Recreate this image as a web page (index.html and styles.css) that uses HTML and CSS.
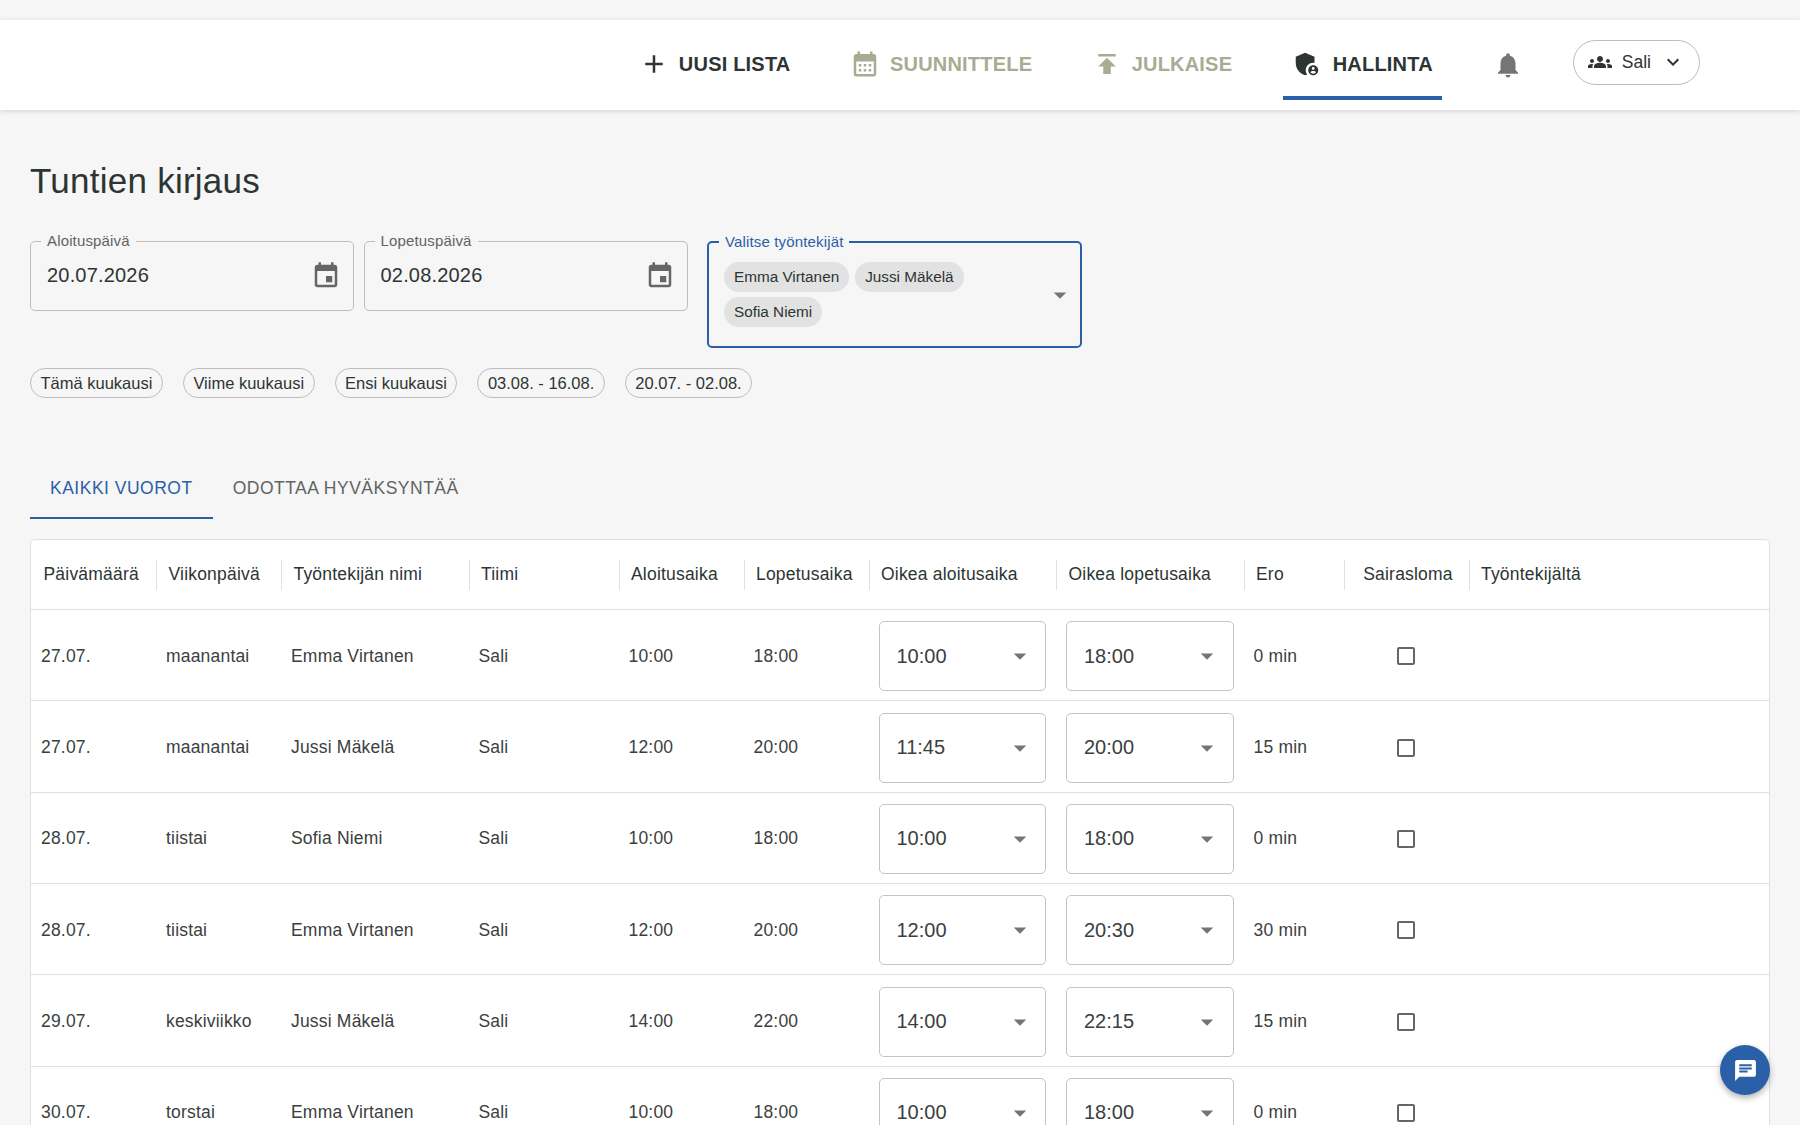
FILE: index.html
```html
<!DOCTYPE html>
<html lang="en">
<head>
    <meta charset="UTF-8">
    <title>Tuntien kirjaus</title>
    <link rel="stylesheet" href="styles.css">
</head>
<body>
    <svg class="defs" width="0" height="0">
        <symbol id="i-add" viewBox="0 0 24 24"><path d="M19 13h-6v6h-2v-6H5v-2h6V5h2v6h6v2z"/></symbol>
        <symbol id="i-month" viewBox="0 0 24 24"><path d="M19 4h-1V2h-2v2H8V2H6v2H5c-1.11 0-1.99.9-1.99 2L3 20a2 2 0 0 0 2 2h14c1.1 0 2-.9 2-2V6c0-1.1-.9-2-2-2zm0 16H5V10h14v10zM9 14H7v-2h2v2zm4 0h-2v-2h2v2zm4 0h-2v-2h2v2zm-8 4H7v-2h2v2zm4 0h-2v-2h2v2zm4 0h-2v-2h2v2z"/></symbol>
        <symbol id="i-publish" viewBox="0 0 24 24"><path d="M5 4v2h14V4H5zm0 10h4v6h6v-6h4l-7-7-7 7z"/></symbol>
        <symbol id="i-admin" viewBox="0 0 24 24"><path d="M17 11c.34 0 .67.04 1 .09V6.27L10.5 3 3 6.27v4.91c0 4.54 3.2 8.79 7.5 9.82.55-.13 1.08-.32 1.6-.55-.69-.98-1.1-2.17-1.1-3.45 0-3.31 2.69-6 6-6z"/><path d="M17 13c-2.21 0-4 1.79-4 4s1.79 4 4 4 4-1.79 4-4-1.79-4-4-4zm0 1.38c.62 0 1.12.51 1.12 1.12s-.51 1.12-1.12 1.12-1.12-.51-1.12-1.12.5-1.12 1.12-1.12zm0 5.37c-.93 0-1.74-.46-2.24-1.17.05-.72 1.51-1.08 2.24-1.08s2.19.36 2.24 1.08c-.5.71-1.31 1.17-2.24 1.17z"/></symbol>
        <symbol id="i-bell" viewBox="0 0 24 24"><path d="M12 22c1.1 0 2-.9 2-2h-4c0 1.1.89 2 2 2zm6-6v-5c0-3.07-1.64-5.64-4.5-6.32V4c0-.83-.67-1.5-1.5-1.5s-1.5.67-1.5 1.5v.68C7.63 5.36 6 7.92 6 11v5l-2 2v1h16v-1l-2-2z"/></symbol>
        <symbol id="i-groups" viewBox="0 0 24 24"><path d="M12 12.75c1.63 0 3.07.39 4.24.9 1.08.48 1.76 1.56 1.76 2.73V18H6v-1.61c0-1.18.68-2.26 1.76-2.73 1.17-.52 2.61-.91 4.24-.91zM4 13c1.1 0 2-.9 2-2s-.9-2-2-2-2 .9-2 2 .9 2 2 2zm1.13 1.1c-.37-.06-.74-.1-1.13-.1-.99 0-1.93.21-2.78.58C.48 14.9 0 15.62 0 16.43V18h4.5v-1.61c0-.83.23-1.61.63-2.29zM20 13c1.1 0 2-.9 2-2s-.9-2-2-2-2 .9-2 2 .9 2 2 2zm4 3.43c0-.81-.48-1.53-1.22-1.85-.85-.37-1.79-.58-2.78-.58-.39 0-.76.04-1.13.1.4.68.63 1.46.63 2.29V18H24v-1.57zM12 6c1.66 0 3 1.34 3 3s-1.34 3-3 3-3-1.34-3-3 1.34-3 3-3z"/></symbol>
        <symbol id="i-expand" viewBox="0 0 24 24"><path d="M16.59 8.59 12 13.17 7.41 8.59 6 10l6 6 6-6z"/></symbol>
        <symbol id="i-event" viewBox="0 0 24 24"><path d="M17 12h-5v5h5v-5zM16 1v2H8V1H6v2H5c-1.11 0-1.99.9-1.99 2L3 19c0 1.1.89 2 2 2h14c1.1 0 2-.9 2-2V5c0-1.1-.9-2-2-2h-1V1h-2zm3 18H5V8h14v11z"/></symbol>
        <symbol id="i-drop" viewBox="0 0 24 24"><path d="M7 10l5 5 5-5z"/></symbol>
        <symbol id="i-check" viewBox="0 0 24 24"><path d="M19 5v14H5V5h14m0-2H5c-1.1 0-2 .9-2 2v14c0 1.1.9 2 2 2h14c1.1 0 2-.9 2-2V5c0-1.1-.9-2-2-2z"/></symbol>
        <symbol id="i-chat" viewBox="0 0 24 24"><path d="M20 2H4c-1.1 0-1.99.9-1.99 2L2 22l4-4h14c1.1 0 2-.9 2-2V4c0-1.1-.9-2-2-2zM6 9h12v2H6V9zm8 5H6v-2h8v2zm4-6H6V6h12v2z"/></symbol>
    </svg>

    <header class="topbar">
        <nav class="nav">
            <a class="nav-item"><svg class="nav-icon"><use href="#i-add"/></svg>UUSI LISTA</a>
            <a class="nav-item disabled"><svg class="nav-icon"><use href="#i-month"/></svg>SUUNNITTELE</a>
            <a class="nav-item disabled"><svg class="nav-icon"><use href="#i-publish"/></svg>JULKAISE</a>
            <a class="nav-item active"><svg class="nav-icon"><use href="#i-admin"/></svg>HALLINTA</a>
        </nav>
        <svg class="bell"><use href="#i-bell"/></svg>
        <div class="team-pill">
            <svg class="team-icon"><use href="#i-groups"/></svg>
            <span>Sali</span>
            <svg class="team-icon"><use href="#i-expand"/></svg>
        </div>
    </header>

    <main class="content">
        <h1 class="title">Tuntien kirjaus</h1>

        <div class="filters">
            <fieldset class="field date-field">
                <legend>Aloituspäivä</legend>
                <span class="field-value">20.07.2026</span>
                <svg class="field-icon"><use href="#i-event"/></svg>
            </fieldset>
            <fieldset class="field date-field">
                <legend>Lopetuspäivä</legend>
                <span class="field-value">02.08.2026</span>
                <svg class="field-icon"><use href="#i-event"/></svg>
            </fieldset>
            <fieldset class="field people-field">
                <legend>Valitse työntekijät</legend>
                <div class="people">
                    <span class="person">Emma Virtanen</span>
                    <span class="person">Jussi Mäkelä</span>
                    <span class="person">Sofia Niemi</span>
                </div>
                <svg class="drop"><use href="#i-drop"/></svg>
            </fieldset>
        </div>

        <div class="ranges">
            <span class="range">Tämä kuukausi</span>
            <span class="range">Viime kuukausi</span>
            <span class="range">Ensi kuukausi</span>
            <span class="range">03.08. - 16.08.</span>
            <span class="range">20.07. - 02.08.</span>
        </div>

        <div class="tabs">
            <a class="tab current">KAIKKI VUOROT</a>
            <a class="tab">ODOTTAA HYVÄKSYNTÄÄ</a>
        </div>

        <section class="grid-card">
            <div class="row head">
                <div class="cell">Päivämäärä</div>
                <div class="cell">Viikonpäivä</div>
                <div class="cell">Työntekijän nimi</div>
                <div class="cell">Tiimi</div>
                <div class="cell">Aloitusaika</div>
                <div class="cell">Lopetusaika</div>
                <div class="cell">Oikea aloitusaika</div>
                <div class="cell">Oikea lopetusaika</div>
                <div class="cell">Ero</div>
                <div class="cell center">Sairasloma</div>
                <div class="cell">Työntekijältä</div>
            </div>

            <div class="row">
                <div class="cell">27.07.</div>
                <div class="cell">maanantai</div>
                <div class="cell">Emma Virtanen</div>
                <div class="cell">Sali</div>
                <div class="cell">10:00</div>
                <div class="cell">18:00</div>
                <div class="cell"><div class="time">10:00<svg class="drop"><use href="#i-drop"/></svg></div></div>
                <div class="cell"><div class="time">18:00<svg class="drop"><use href="#i-drop"/></svg></div></div>
                <div class="cell">0 min</div>
                <div class="cell center"><svg class="check"><use href="#i-check"/></svg></div>
                <div class="cell"></div>
            </div>
            <div class="row">
                <div class="cell">27.07.</div>
                <div class="cell">maanantai</div>
                <div class="cell">Jussi Mäkelä</div>
                <div class="cell">Sali</div>
                <div class="cell">12:00</div>
                <div class="cell">20:00</div>
                <div class="cell"><div class="time">11:45<svg class="drop"><use href="#i-drop"/></svg></div></div>
                <div class="cell"><div class="time">20:00<svg class="drop"><use href="#i-drop"/></svg></div></div>
                <div class="cell">15 min</div>
                <div class="cell center"><svg class="check"><use href="#i-check"/></svg></div>
                <div class="cell"></div>
            </div>
            <div class="row">
                <div class="cell">28.07.</div>
                <div class="cell">tiistai</div>
                <div class="cell">Sofia Niemi</div>
                <div class="cell">Sali</div>
                <div class="cell">10:00</div>
                <div class="cell">18:00</div>
                <div class="cell"><div class="time">10:00<svg class="drop"><use href="#i-drop"/></svg></div></div>
                <div class="cell"><div class="time">18:00<svg class="drop"><use href="#i-drop"/></svg></div></div>
                <div class="cell">0 min</div>
                <div class="cell center"><svg class="check"><use href="#i-check"/></svg></div>
                <div class="cell"></div>
            </div>
            <div class="row">
                <div class="cell">28.07.</div>
                <div class="cell">tiistai</div>
                <div class="cell">Emma Virtanen</div>
                <div class="cell">Sali</div>
                <div class="cell">12:00</div>
                <div class="cell">20:00</div>
                <div class="cell"><div class="time">12:00<svg class="drop"><use href="#i-drop"/></svg></div></div>
                <div class="cell"><div class="time">20:30<svg class="drop"><use href="#i-drop"/></svg></div></div>
                <div class="cell">30 min</div>
                <div class="cell center"><svg class="check"><use href="#i-check"/></svg></div>
                <div class="cell"></div>
            </div>
            <div class="row">
                <div class="cell">29.07.</div>
                <div class="cell">keskiviikko</div>
                <div class="cell">Jussi Mäkelä</div>
                <div class="cell">Sali</div>
                <div class="cell">14:00</div>
                <div class="cell">22:00</div>
                <div class="cell"><div class="time">14:00<svg class="drop"><use href="#i-drop"/></svg></div></div>
                <div class="cell"><div class="time">22:15<svg class="drop"><use href="#i-drop"/></svg></div></div>
                <div class="cell">15 min</div>
                <div class="cell center"><svg class="check"><use href="#i-check"/></svg></div>
                <div class="cell"></div>
            </div>
            <div class="row">
                <div class="cell">30.07.</div>
                <div class="cell">torstai</div>
                <div class="cell">Emma Virtanen</div>
                <div class="cell">Sali</div>
                <div class="cell">10:00</div>
                <div class="cell">18:00</div>
                <div class="cell"><div class="time">10:00<svg class="drop"><use href="#i-drop"/></svg></div></div>
                <div class="cell"><div class="time">18:00<svg class="drop"><use href="#i-drop"/></svg></div></div>
                <div class="cell">0 min</div>
                <div class="cell center"><svg class="check"><use href="#i-check"/></svg></div>
                <div class="cell"></div>
            </div>
        </section>
    </main>

    <button class="chat-btn"><svg class="chat-icon"><use href="#i-chat"/></svg></button>
</body>
</html>
```

FILE: styles.css
```css
html, body {
    height: 100%;
    overflow: hidden;
}

body {
    margin: 0;
    padding-top: 20px;
    box-sizing: border-box;
    background-color: #f6f6f6;
    color: #2d3533;
    font-family: "Liberation Sans", Arial, sans-serif;
}

.defs {
    display: block;
    height: 0;
}

svg {
    fill: currentColor;
    flex: none;
}

/* top bar */
.topbar {
    display: flex;
    align-items: center;
    justify-content: flex-end;
    height: 90px;
    padding-right: 100px;
    background-color: #fff;
    box-shadow: 0 1px 5px rgba(0, 0, 0, 0.16);
}

.nav {
    display: flex;
    gap: 41.5px;
}

.nav-item {
    display: flex;
    align-items: center;
    gap: 10px;
    height: 70px;
    box-sizing: border-box;
    padding: 0 9px 2px;
    border-bottom: 4px solid transparent;
    border-top: 4px solid transparent;
    font-size: 20px;
    font-weight: bold;
    letter-spacing: 0.2px;
}

.nav-item.disabled {
    color: #a9ab92;
}

.nav-item.active {
    gap: 11px;
    border-bottom-color: #2b5fa8;
}

.nav-icon {
    width: 30px;
    height: 30px;
}

.bell {
    width: 30px;
    height: 30px;
    margin-left: 51px;
    color: #757575;
}

.team-pill {
    display: flex;
    align-items: center;
    gap: 10px;
    height: 45px;
    box-sizing: border-box;
    margin: 0 0 6px 50px;
    padding: 0 14px;
    border: 1.25px solid #bdbdbd;
    border-radius: 23px;
    font-size: 17.5px;
}

.team-icon {
    width: 24px;
    height: 24px;
}

/* page */
.content {
    padding: 0 30px;
}

.title {
    margin: 50px 0 0;
    font-size: 35px;
    font-weight: normal;
    letter-spacing: 0.25px;
    line-height: 42px;
}

.filters {
    display: flex;
    align-items: flex-start;
    gap: 9.5px;
    margin-top: 30px;
}

.field {
    display: flex;
    box-sizing: border-box;
    min-width: 0;
    margin: 0;
    padding: 0 15px 0 16px;
    border: 1.25px solid #bdbdbd;
    border-radius: 5px;
}

.field legend {
    margin-left: -6px;
    padding: 0 6px;
    color: #5f6563;
    font-size: 15px;
    letter-spacing: 0.15px;
    line-height: 18px;
}

.date-field {
    align-items: center;
    justify-content: space-between;
    width: 324px;
    height: 79px;
    padding-bottom: 9px;
}

.field-value {
    font-size: 20px;
    letter-spacing: 0.19px;
}

.field-icon {
    width: 30px;
    height: 30px;
    margin-right: -3px;
    color: #666;
}

.people-field {
    align-items: center;
    width: 375px;
    height: 115px;
    margin: 1px 0 0 10px;
    padding: 6px 15px 14px;
    border: 2.5px solid #2b5fa8;
}

.people-field legend {
    margin-left: -5px;
    color: #2b5fa8;
}

.people {
    display: flex;
    flex: 1;
    flex-wrap: wrap;
    gap: 5px 6px;
}

.person {
    padding: 0 10px;
    border-radius: 15px;
    background-color: #e2e2e2;
    font-size: 15.3px;
    line-height: 30px;
}

.drop {
    width: 30px;
    height: 30px;
    color: #757575;
}

.people-field .drop {
    margin-right: -10px;
}

.ranges {
    display: flex;
    gap: 20px;
    margin-top: 20px;
}

.range {
    padding: 0 9.5px;
    border: 1.25px solid #bdbdbd;
    border-radius: 15px;
    font-size: 16.5px;
    line-height: 28px;
}

/* tabs */
.tabs {
    display: flex;
    margin-top: 61px;
}

.tab {
    display: flex;
    align-items: center;
    height: 60px;
    box-sizing: border-box;
    padding: 0 20px;
    border-bottom: 2.5px solid transparent;
    color: #5f6563;
    font-size: 17.5px;
    letter-spacing: 0.5px;
}

.tab.current {
    border-bottom-color: #2b5fa8;
    color: #2b5fa8;
}

/* table */
.grid-card {
    margin-top: 20px;
    border: 1.25px solid #e0e0e0;
    border-radius: 5px;
    background-color: #fff;
}

.row {
    display: grid;
    grid-template-columns: 125px 125px 187.5px 150px 125px 125px 187.5px 187.5px 100px 125px 1fr;
    height: 91.35px;
    box-sizing: border-box;
    padding-top: 2px;
    border-bottom: 1.25px solid #e0e0e0;
    color: #3b403e;
    font-size: 17.5px;
    letter-spacing: 0.19px;
}

.row.head {
    height: 70px;
    padding-top: 0;
    color: #2d3533;
    letter-spacing: 0.2px;
}

.cell {
    display: flex;
    align-items: center;
    padding: 0 10px;
    white-space: nowrap;
}

.head .cell {
    padding: 0 12.5px;
}

.head .cell + .cell {
    background: linear-gradient(#e0e0e0, #e0e0e0) left center / 1px 30px no-repeat;
}

.cell.center {
    justify-content: center;
}

.head .cell.center {
    padding-left: 16.5px;
}

.time {
    display: flex;
    align-items: center;
    justify-content: space-between;
    width: 100%;
    height: 70px;
    box-sizing: border-box;
    padding: 0 10.5px 0 17px;
    border: 1.25px solid #c4c4c4;
    border-radius: 5px;
    font-size: 20px;
    letter-spacing: 0;
}

.check {
    width: 24px;
    height: 24px;
    color: #666;
}

/* chat button */
.chat-btn {
    position: fixed;
    right: 30px;
    bottom: 30px;
    display: flex;
    align-items: center;
    justify-content: center;
    width: 50px;
    height: 50px;
    padding: 0;
    border: none;
    border-radius: 50%;
    background-color: #2b5fa8;
    color: #fff;
    box-shadow: 0 3px 6px rgba(0, 0, 0, 0.3);
}

.chat-icon {
    width: 25px;
    height: 25px;
}
```
